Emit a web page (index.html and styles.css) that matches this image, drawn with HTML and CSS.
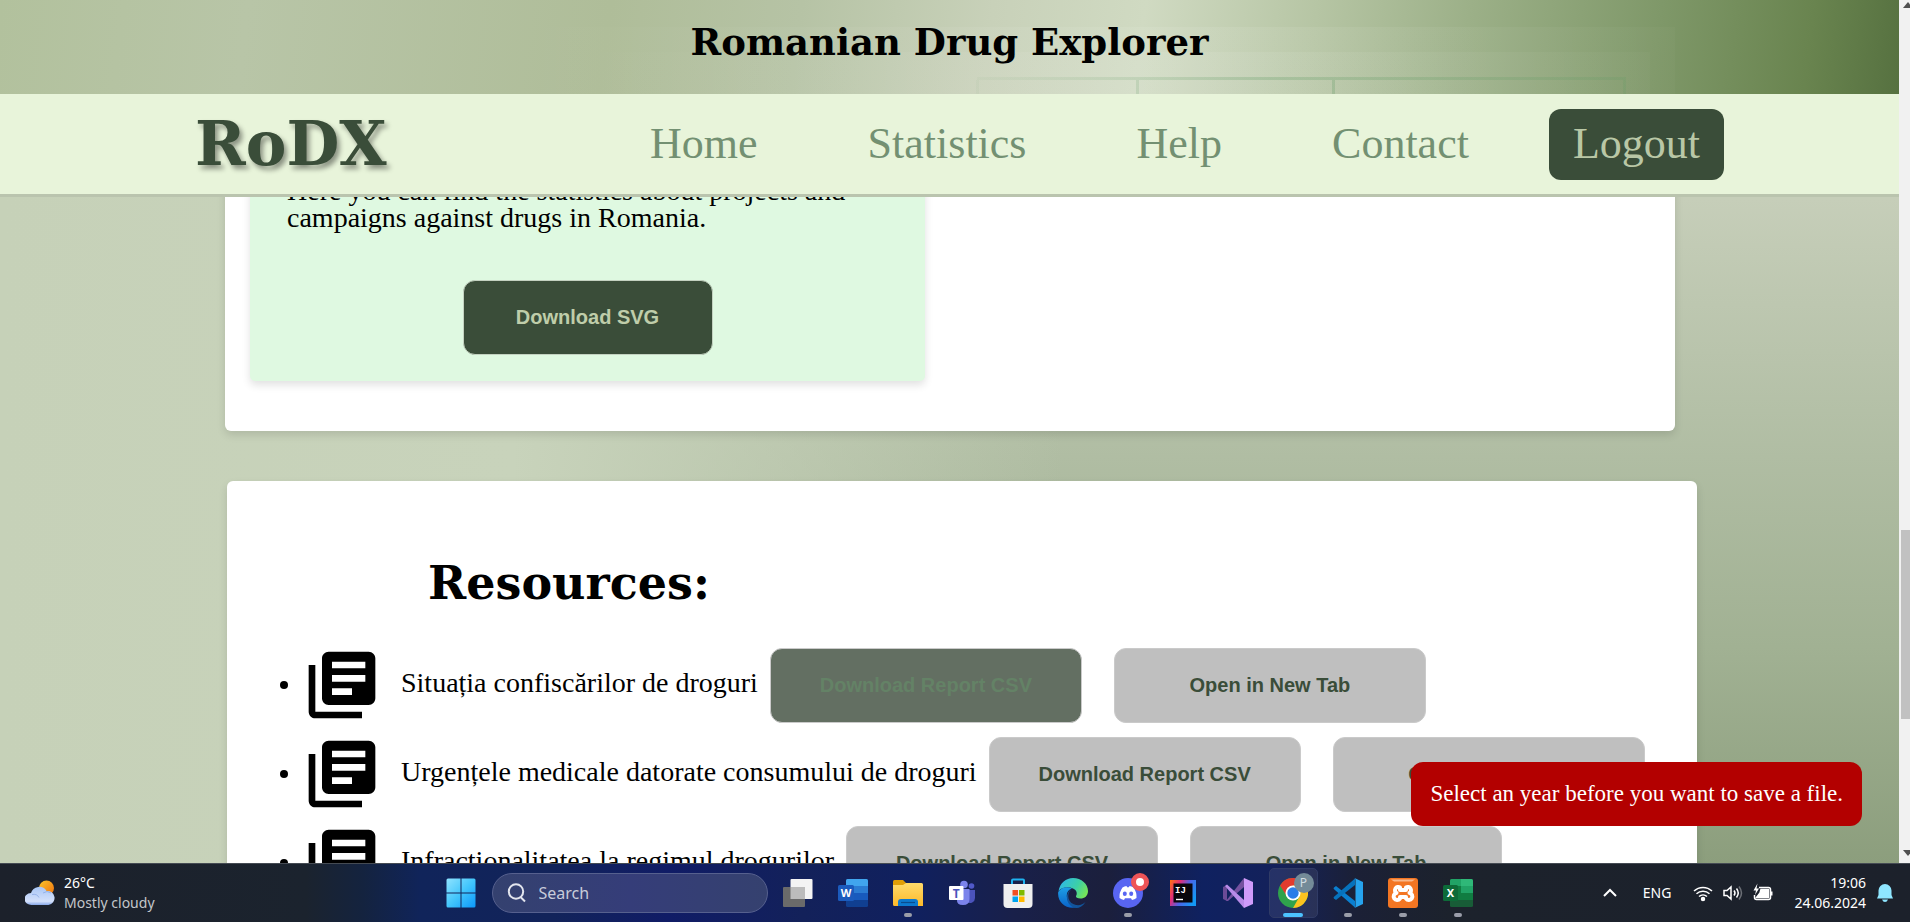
FILE: index.html
```html
<!DOCTYPE html>
<html lang="en">
<head>
<meta charset="utf-8">
<title>Romanian Drug Explorer</title>
<link rel="stylesheet" href="styles.css">
</head>
<body>
<svg class="defs" aria-hidden="true">
  <symbol id="books" viewBox="0 0 24 24"><path d="M4 6H2v14c0 1.1.9 2 2 2h14v-2H4V6zm16-4H8c-1.100 0-2 .9-2 2v12c0 1.100.9 2 2 2h12c1.100 0 2-.9 2-2V4c0-1.100-.9-2-2-2zm-1 5H9V5h10v2zm0 4H9V9h10v2zm-4 4H9v-2h6v2z"/></symbol>
</svg>
<div class="screen">
  <div class="browser">
    <div class="page">
      <header class="banner">
        <svg class="banner-art" viewBox="0 0 1899 94" preserveAspectRatio="none" aria-hidden="true">
          <defs>
            <linearGradient id="haze"><stop stop-color="#fff" stop-opacity="0"/><stop offset=".6" stop-color="#fff" stop-opacity=".08"/><stop offset="1" stop-color="#fff" stop-opacity=".02"/></linearGradient>
            <linearGradient id="rule" gradientUnits="userSpaceOnUse" x1="977" y1="0" x2="1626" y2="0"><stop stop-color="#5f9a63" stop-opacity=".05"/><stop offset=".45" stop-color="#5f9a63" stop-opacity=".28"/><stop offset="1" stop-color="#5f9a63" stop-opacity=".2"/></linearGradient>
          </defs>
          <rect x="500" y="27" width="1175" height="67" fill="url(#haze)"/>
          <rect x="560" y="52" width="1090" height="42" fill="url(#haze)"/>
          <path d="M977 77H1626V80H977zM976 80h3v14h-3zM1136 80h3v14h-3zM1332 80h3v14h-3zM1623 80h3v14h-3z" fill="url(#rule)"/>
        </svg>
        <h1 class="banner-title">Romanian Drug Explorer</h1>
      </header>
      <nav class="nav">
        <a class="logo" href="#">RoDX</a>
        <div class="links">
          <a class="link" href="#">Home</a>
          <a class="link" href="#">Statistics</a>
          <a class="link" href="#">Help</a>
          <a class="link" href="#">Contact</a>
          <button class="logout" type="button">Logout</button>
        </div>
      </nav>
      <main class="content">
        <div class="scrolled">
          <section class="panel charts">
            <article class="chart-card">
              <p class="chart-text">Here you can find the statistics about projects and campaigns against drugs in Romania.</p>
              <button class="btn btn-svg" type="button">Download SVG</button>
            </article>
          </section>
          <section class="panel resources">
            <h2 class="resources-title">Resources:</h2>
            <ul class="list">
              <li class="item"><svg class="item-icon" aria-hidden="true"><use href="#books"/></svg><span class="item-name">Situația confiscărilor de droguri</span><button class="btn btn-csv pressed" type="button">Download Report CSV</button><button class="btn btn-csv btn-open" type="button">Open in New Tab</button></li>
              <li class="item"><svg class="item-icon" aria-hidden="true"><use href="#books"/></svg><span class="item-name">Urgențele medicale datorate consumului de droguri</span><button class="btn btn-csv" type="button">Download Report CSV</button><button class="btn btn-csv btn-open" type="button">Open in New Tab</button></li>
              <li class="item"><svg class="item-icon" aria-hidden="true"><use href="#books"/></svg><span class="item-name">Infracționalitatea la regimul drogurilor</span><button class="btn btn-csv" type="button">Download Report CSV</button><button class="btn btn-csv btn-open" type="button">Open in New Tab</button></li>
            </ul>
          </section>
        </div>
      </main>
      <div class="toast" role="alert">Select an year before you want to save a file.</div>
    </div>
    <div class="scrollbar" aria-hidden="true">
      <svg class="arrow" viewBox="0 0 11 17"><path d="M4 8L9 2L14 8z"/></svg>
      <div class="track"><div class="thumb"></div></div>
      <svg class="arrow" viewBox="0 0 11 17"><path d="M4 4L9 10L14 4z"/></svg>
    </div>
  </div>

  <footer class="taskbar">
    <div class="weather">
      <svg class="weather-icon" viewBox="0 0 30 26" aria-hidden="true">
        <defs>
          <linearGradient id="sun" x2="1" y2="1"><stop stop-color="#f9c52c"/><stop offset="1" stop-color="#f0700c"/></linearGradient>
          <linearGradient id="cloud" x2="0" y2="1"><stop stop-color="#a9c6f5"/><stop offset=".8" stop-color="#d3e0fb"/><stop offset="1" stop-color="#87a7e8"/></linearGradient>
        </defs>
        <circle cx="21.500" cy="8" r="7.500" fill="url(#sun)"/>
        <path d="M7 25a7 6 0 0 1-1-12a8.500 8.500 0 0 1 15.500-2a7 7 0 0 1 2 14z" fill="url(#cloud)"/>
        <path d="M7 14.500q5-1 7 3M18 13q4-3 8 0" stroke="#7b9de0" fill="none" opacity=".6"/>
      </svg>
      <div class="stack"><span class="bright">26°C</span><span class="dim">Mostly cloudy</span></div>
    </div>
    <div class="apps">
      <button class="app" type="button" aria-label="Start">
        <svg class="ico" viewBox="0 0 30 30"><defs><linearGradient id="win" x2="1" y2="1"><stop stop-color="#8fe3ff"/><stop offset=".5" stop-color="#43c6fc"/><stop offset="1" stop-color="#0b98fb"/></linearGradient></defs><path fill="url(#win)" d="M2 .5H14.500V14.500H.5V2Q.5.5 2 .5zM15.500.5H28q1.500 0 1.500 1.500V14.500H15.500zM.5 15.500H14.500V29.500H2Q.5 29.500.5 28zM15.500 15.500H29.500V28q0 1.500-1.500 1.500H15.500z"/></svg>
      </button>
      <label class="search">
        <svg class="search-icon" viewBox="0 0 20 20" aria-hidden="true"><circle cx="9" cy="8.500" r="7.200"/><path d="M13.500 14L18 18.500"/></svg>
        <input class="search-input" type="text" placeholder="Search" aria-label="Search">
      </label>
      <button class="app" type="button" aria-label="Task View">
        <svg class="ico" viewBox="0 0 30 30"><rect x="7.500" y="1" width="22" height="20" rx="1" fill="#f4f4f4"/><rect y="9" width="22" height="20" rx="1" fill="#6a6a6a"/><path d="M7.500 9H22V21H7.500z" fill="#bcbcbc"/></svg>
      </button>
      <button class="app" type="button" aria-label="Word">
        <svg class="ico" viewBox="0 0 30 30"><rect x="8" y="1" width="22" height="28" rx="1.500" fill="#103f91"/><path d="M8 8h22v14H8z" fill="#185abd"/><path d="M8 8h22v7H8z" fill="#2b7cd3"/><path d="M9.500 1h19q1.500 0 1.500 1.500V8H8V2.500Q8 1 9.500 1z" fill="#41a5ee"/><rect y="7" width="16" height="16" rx="1.500" fill="#1b5bbd"/><text x="8" y="19" class="glyph g11">W</text></svg>
      </button>
      <button class="app running" type="button" aria-label="File Explorer">
        <svg class="ico" viewBox="0 0 30 30"><defs><linearGradient id="fold" x2="0" y2="1"><stop stop-color="#ffdb6b"/><stop offset="1" stop-color="#fdb92a"/></linearGradient></defs><path d="M0 3.500Q0 2 1.500 2H10l3 3v5H0z" fill="#e19e06"/><path d="M0 7h10l3-2h15.500Q30 5 30 6.500V28H1.500Q0 28 0 26.500z" fill="url(#fold)"/><path d="M5 28v-4q0-3 3-3h14q3 0 3 3v4z" fill="#0d79cf"/><path d="M8 24.500h14" stroke="#0a4c8e" stroke-width="1.200"/></svg>
      </button>
      <button class="app" type="button" aria-label="Teams">
        <svg class="ico" viewBox="0 0 30 30"><circle cx="23.500" cy="8" r="2.800" fill="#5059c9"/><path d="M19 12h8v8a5 5 0 0 1-8 4z" fill="#4b53bc"/><circle cx="16" cy="6.500" r="3.800" fill="#7b83eb"/><path d="M9 11h12.500v10q0 6-6.500 6t-6-5z" fill="#7b83eb"/><rect x="1" y="8" width="14.500" height="14" rx="1" fill="#fff"/><text x="8.200" y="19.500" class="glyph g12 teams">T</text></svg>
      </button>
      <button class="app" type="button" aria-label="Microsoft Store">
        <svg class="ico" viewBox="0 0 30 30"><path d="M9 7V2.500Q9 1.500 10 1.500H20Q21 1.500 21 2.500V7" fill="none" stroke="#1fb2ef" stroke-width="2"/><path d="M.5 6h29v20q0 4-4 4h-21q-4 0-4-4z" fill="#efefef"/><path d="M9.500 12H15v5.500H9.500z" fill="#f25022"/><path d="M16 12h5.500v5.500H16z" fill="#7fba00"/><path d="M9.500 18.500H15V24H9.500z" fill="#00a4ef"/><path d="M16 18.500h5.500V24H16z" fill="#ffb900"/></svg>
      </button>
      <button class="app" type="button" aria-label="Edge">
        <svg class="ico" viewBox="0 0 30 30"><defs><linearGradient id="e1" y1=".2" x2="1" y2=".6"><stop stop-color="#2fb6ea"/><stop offset=".6" stop-color="#3cd0a7"/><stop offset="1" stop-color="#75e558"/></linearGradient><linearGradient id="e2" x2="0" y2="1"><stop stop-color="#1e9fe6"/><stop offset="1" stop-color="#0a63c9"/></linearGradient></defs><path d="M.5 13C2 5 8 0 15 0c8.500 0 15 6 15 13 0 5-3.500 7.500-7.500 7.500-3 0-5-1-4.500-2.500 1.500-2 1-6-3-7.500C10 8.500 4 9 .5 13z" fill="url(#e1)"/><path d="M.2 14C3 9 9 8 14 10.500c-4 1-6 5-5 9 1.300 6 6 9 10 9.500C9 32-1 25 .2 14z" fill="url(#e2)"/><path d="M13 11.500c-5 5-3 14 5 15.500 4 .6 7-.7 9.500-3-2.500 4-6 6-9 6C9 29 5.500 17 13 11.500z" fill="#12549b"/></svg>
      </button>
      <button class="app running" type="button" aria-label="Discord">
        <svg class="ico" viewBox="0 0 30 30"><circle cx="15" cy="15" r="15" fill="#5865f2"/><path d="M9.500 9.500q2-1.200 4-1.500l.6 1.300h1.800L16.500 8q2 .3 4 1.500 3.500 5 3 10.500-2 1.700-4.500 2l-1-1.800h-6l-1 1.800q-2.500-.3-4.500-2-.5-5.500 3-10.500z" fill="#fff"/><ellipse cx="11.800" cy="15.800" rx="2" ry="2.200" fill="#5865f2"/><ellipse cx="18.200" cy="15.800" rx="2" ry="2.200" fill="#5865f2"/></svg>
        <span class="alert-badge"></span>
      </button>
      <button class="app" type="button" aria-label="IntelliJ IDEA">
        <svg class="ico" viewBox="0 0 30 30"><defs><linearGradient id="ij" y1=".1" x2="1" y2=".6"><stop stop-color="#fe6b1a"/><stop offset=".3" stop-color="#e12c7a"/><stop offset=".6" stop-color="#4d63e8"/><stop offset="1" stop-color="#1498f4"/></linearGradient></defs><path d="M2 2h26v26H2z" fill="url(#ij)"/><path d="M5.500 5.500h19v19h-19z" fill="#08050c"/><path d="M8 21.500h7" stroke="#fff" stroke-width="1.400"/><text x="12.500" y="15" class="glyph mono">IJ</text></svg>
      </button>
      <button class="app" type="button" aria-label="Visual Studio">
        <svg class="ico" viewBox="0 0 30 30"><path d="M0 9l4-2v16l-4-2z" fill="#6c4b97"/><path d="M3 23L21 0v9L5 23z" fill="#74519f"/><path d="M4 6.500L21 22v8L2 8z" fill="#b98be9"/><path d="M21 0l9 4v22l-9 4z" fill="#cf9bfa"/></svg>
      </button>
      <button class="app active" type="button" aria-label="Chrome">
        <svg class="ico" viewBox="0 0 30 30"><circle cx="15" cy="15" r="15" fill="#2fa24c"/><path d="M2 7.500A15 15 0 0 1 28 7.500H15L9 18.500z" fill="#e33b2e"/><path d="M28 7.500A15 15 0 0 1 15 30l6.500-11.500L15 7.500z" fill="#fcc31e"/><circle cx="15" cy="15" r="7.500" fill="#fff"/><circle cx="15" cy="15" r="5.700" fill="#2b7de9"/></svg>
        <span class="profile-badge">P</span>
      </button>
      <button class="app running" type="button" aria-label="Visual Studio Code">
        <svg class="ico" viewBox="0 0 30 30"><path d="M1 9.500L3 8l19 15v6.500L.8 11q-.6-.8.2-1.500z" fill="#0a7fd0"/><path d="M1 20.500L3 22 22 7V.5L.8 19q-.6.8.2 1.500z" fill="#0672bd"/><path d="M21.500 0L30 4V26l-8.500 4q1-.8 1-2V2q0-1.200-1-2z" fill="#26a3ee"/></svg>
      </button>
      <button class="app running" type="button" aria-label="XAMPP">
        <svg class="ico" viewBox="0 0 30 30"><rect width="30" height="30" rx="3" fill="#f37623"/><path d="M3 1.500h24l-3 2H6z" fill="#f9b88b"/><path d="M12 12v-2.500a3 3 0 1 0-3.500 5.500a3.500 3.500 0 1 0 3.500 5.500V19h6v1.500a3.500 3.500 0 1 0 3.500-5.500a3 3 0 1 0-3.500-5.500V12z" fill="none" stroke="#fff" stroke-width="4" stroke-linejoin="round"/></svg>
      </button>
      <button class="app running" type="button" aria-label="Excel">
        <svg class="ico" viewBox="0 0 30 30"><rect x="7" y="1" width="23" height="28" rx="1.500" fill="#185c37"/><path d="M7 8h11v14H7z" fill="#107c41"/><path d="M18 15h12v7H18z" fill="#107c41"/><path d="M18 8h12v7H18z" fill="#21a366"/><path d="M8.500 1H18v7H7V2.500Q7 1 8.500 1z" fill="#21a366"/><path d="M18 1h10.500Q30 1 30 2.500V8H18z" fill="#2fb878"/><rect y="7" width="15" height="16" rx="1.500" fill="#0d6b38"/><text x="7.500" y="19" class="glyph g11">X</text></svg>
      </button>
    </div>
    <div class="tray">
      <svg class="chevron" viewBox="0 0 14 20" aria-hidden="true"><path d="M1 13l6-6 6 6"/></svg>
      <span class="lang">ENG</span>
      <div class="status">
        <svg class="status-icon" viewBox="0 0 20 20" aria-hidden="true"><path d="M1 8a13 13 0 0 1 18 0M3.500 10.800a9.500 9.500 0 0 1 13 0M6 13.500a6 6 0 0 1 8 0"/><circle cx="10" cy="16" r="1.500" fill="#fff"/></svg>
        <svg class="status-icon" viewBox="0 0 20 20" aria-hidden="true"><path d="M1 7.500H4L8 4V16L4 12.500H1zM11 7.500q2 2.500 0 5M13.500 5.500q3.500 4.500 0 9"/><path d="M16 3.500q5 6.500 0 13" opacity=".35"/></svg>
        <svg class="status-icon" viewBox="0 0 20 20" aria-hidden="true"><path d="M6 4.500H15.500Q17.500 4.500 17.500 6.500V14.500Q17.500 16.500 15.500 16.500H3.500Q1.500 16.500 1.500 14.500V12"/><path d="M8 6.500h7.500V14.500H3.500L7 10z" fill="#fff"/><path d="M17.500 8.500h2v4h-2z" fill="#fff" stroke="none"/><path d="M4.500.5L.5 7.500H3L2 12 6 5.500H3.500z" fill="#fff" stroke="none"/></svg>
      </div>
      <div class="stack clock"><span>19:06</span><span>24.06.2024</span></div>
      <svg class="bell" viewBox="0 0 18 20" aria-hidden="true"><path d="M9 1a6.500 6.500 0 0 1 6.500 6.500V12l1.500 3.500H1L2.500 12V7.500A6.500 6.500 0 0 1 9 1zM6 16.500h6q-1 2.500-3 2.500t-3-2.500z"/></svg>
    </div>
  </footer>
</div>
</body>
</html>
```

FILE: styles.css
```css
* { box-sizing: border-box; }

body {
  margin: 0;
  color: #000;
  font-family: "Liberation Serif", serif;
}

button { font: inherit; cursor: pointer; }
.defs { display: none; }

.screen {
  display: flex;
  flex-direction: column;
  height: 100vh;
  overflow: hidden;
}

.browser {
  display: flex;
  flex: 1;
  min-height: 0;
}

.page {
  position: relative;
  display: flex;
  flex: 1;
  flex-direction: column;
  min-width: 0;
  background:
    linear-gradient(90deg, #c6d1b8 0%, #c8d3bb 27%, #c8d3bb00 56%),
    linear-gradient(180deg, #c6ceb9 23%, #b0bda3 53%, #a1b193 75%, #8c9e7d 100%);
}

/* Banner */
.banner {
  position: relative;
  display: flex;
  align-items: center;
  justify-content: center;
  height: 94px;
  padding-bottom: 10px;
  background: linear-gradient(97deg, #b2c19d 0%, #b8c5a7 13%, #afbd99 32%, #b6c3a5 42%, #c8d1b9 52%, #d0dac2 60%, #b6c5a4 69%, #9cb088 77%, #7f9869 87%, #69844f 95%, #567140 100%);
}

.banner-art {
  position: absolute;
  inset: 0;
  width: 100%;
  height: 100%;
}

.banner-title {
  position: relative;
  margin: 0;
  font: bold 37px/48px "DejaVu Serif", serif;
}

/* Navigation */
.nav {
  display: flex;
  align-items: center;
  justify-content: space-between;
  height: 103px;
  padding: 0 175px 0 195px;
  border-bottom: 3px solid #bac4ae;
  background: #e8f4da;
}

.logo {
  color: #3a4d39;
  font: bold 61px/72px "DejaVu Serif", serif;
  text-decoration: none;
  text-shadow: 3px 4px 5px rgba(0, 0, 0, .4);
}

.links {
  display: flex;
  align-items: center;
  gap: 110px;
}

.link {
  color: #739072;
  font-size: 44px;
  line-height: 50px;
  text-decoration: none;
}

.logout {
  height: 71px;
  margin-left: -30px;
  padding: 0 24px;
  border: 0;
  border-radius: 12px;
  background: #3a4d39;
  color: #b9c7a6;
  font-size: 44px;
  line-height: 50px;
}

/* Scrolled content */
.content {
  flex: 1;
  min-height: 0;
  overflow: hidden;
}

.scrolled { margin-top: -60px; }

.panel {
  border-radius: 6px;
  background: #fff;
  box-shadow: 0 4px 8px rgba(0, 0, 0, .12);
}

.charts {
  margin: 0 224px 50px 225px;
  padding: 20px 25px 50px;
}

.chart-card {
  display: flex;
  flex-direction: column;
  align-items: center;
  gap: 49px;
  width: 675px;
  padding: 20px 37px 26px;
  border-radius: 5px;
  background: #dff9e1;
  box-shadow: 0 4px 8px rgba(0, 0, 0, .12);
}

.chart-text {
  margin: 0;
  font-size: 28px;
  line-height: 27px;
}

.btn {
  flex: none;
  height: 75px;
  border: 1px solid #cacaca;
  border-radius: 12px;
  font: bold 20px "Liberation Sans", sans-serif;
}

.btn-svg {
  width: 250px;
  border-color: #c3d1c0;
  background: #3a4d39;
  color: #bfcdaa;
}

.resources {
  margin: 0 202px 0 227px;
  padding: 70px 50px 50px 53px;
}

.resources-title {
  margin: 0 0 30px 148px;
  font: bold 46px/64px "DejaVu Serif", serif;
}

.list {
  display: flex;
  flex-direction: column;
  gap: 9px;
  margin: 0;
  padding: 0;
  list-style: none;
}

.item {
  display: flex;
  align-items: center;
}

.item::before {
  width: 8px;
  height: 8px;
  margin-right: 14px;
  border-radius: 50%;
  background: #000;
  content: "";
}

.item-icon {
  flex: none;
  width: 80px;
  height: 80px;
}

.item-name {
  margin: 0 12px 0 19px;
  padding-bottom: 4px;
  font-size: 28px;
  line-height: 32px;
  white-space: nowrap;
}

.btn-csv {
  width: 312px;
  background: #bfbfbf;
  color: #3a4d39;
}

.btn-open { margin-left: 32px; }

.pressed {
  background: #636f62;
  color: #648266;
}

.toast {
  position: absolute;
  right: 37px;
  bottom: 37px;
  padding: 20px 19px;
  border-radius: 12px;
  background: #b30000;
  color: #fff;
  font-size: 23px;
  line-height: 24px;
}

/* Page scrollbar */
.scrollbar {
  display: flex;
  flex-direction: column;
  width: 11px;
  background: #f1f1f1;
}

.arrow {
  width: 11px;
  height: 17px;
  fill: #505050;
}

.track {
  flex: 1;
  padding: 513px 0 0 2px;
}

.thumb {
  height: 189px;
  background: #c1c1c1;
}

/* Taskbar */
.taskbar {
  display: grid;
  grid-template-columns: 1fr auto 1fr;
  align-items: center;
  height: 59px;
  padding-left: 9px;
  border-top: 1px solid #454b53;
  background: linear-gradient(90deg, #1c212b 0%, #1b232e 16%, #14233f 19%, #10245a 22%, #12235a 29%, #101c66 35%, #13215a 42%, #10205e 48%, #19204a 53%, #1b1f3c 58%, #0f2160 63%, #14215a 67%, #1b2036 71%, #1c222c 76%, #1c212b 100%);
  color: #fff;
  font: 14px/20px "Noto Sans", sans-serif;
}

.weather {
  display: flex;
  align-items: center;
  gap: 9px;
  padding-left: 16px;
}

.weather-icon { width: 30px; height: 26px; }

.stack {
  display: flex;
  flex-direction: column;
}

.dim { color: #c3c6ca; }

.apps { display: flex; align-items: center; }

.app {
  position: relative;
  display: grid;
  place-items: center;
  width: 55px;
  height: 58px;
  padding: 0;
  border: 0;
  background: none;
}

.ico { width: 30px; height: 30px; }

.active::before {
  position: absolute;
  inset: 4px 3px;
  border: 1px solid #303b66;
  border-radius: 5px;
  background: rgba(255, 255, 255, .08);
  content: "";
}

.active .ico { position: relative; }

.running::after,
.active::after {
  position: absolute;
  bottom: 5px;
  width: 8px;
  height: 4px;
  border-radius: 2px;
  background: #9a9da9;
  content: "";
}

.active::after { width: 20px; background: #4cc2ff; }

.alert-badge,
.profile-badge {
  position: absolute;
  border-radius: 50%;
}

.alert-badge {
  top: 9px;
  left: 30px;
  width: 18px;
  height: 18px;
  border: 5px solid #ee5457;
  background: #fff;
}

.profile-badge {
  top: 9px;
  left: 28px;
  width: 20px;
  height: 20px;
  background: #748b98;
  color: #d3dee3;
  font: 12px/20px "Noto Sans", sans-serif;
  text-align: center;
}

.glyph {
  fill: #fff;
  font-family: "Noto Sans", sans-serif;
  font-weight: bold;
  text-anchor: middle;
}

.g11 { font-size: 11px; }
.g12 { font-size: 12px; }
.teams { fill: #4b53bc; }
.mono { font-family: "Liberation Mono", monospace; font-size: 9px; }

.search {
  display: flex;
  align-items: center;
  gap: 12px;
  width: 276px;
  height: 40px;
  margin: 0 3px;
  padding: 0 14px;
  border: 1px solid #56608e;
  border-radius: 20px;
  background: linear-gradient(90deg, #34416f, #353d79 50%, #35416f);
}

.search-icon {
  flex: none;
  width: 20px;
  height: 20px;
  fill: none;
  stroke: #e2e5ee;
  stroke-width: 2;
}

.search-input {
  width: 100%;
  padding: 0;
  border: 0;
  outline: 0;
  background: none;
  color: #fff;
  font: 16px/24px "Noto Sans", sans-serif;
}

.search-input::placeholder { color: #c8ccdb; }

.tray {
  display: flex;
  align-items: center;
  justify-content: flex-end;
  padding-right: 16px;
}

.chevron,
.status-icon {
  fill: none;
  stroke: #fff;
}

.chevron { width: 14px; height: 20px; stroke-width: 2; }
.lang { margin: 0 22px 0 26px; }

.status { display: flex; gap: 10px; }
.status-icon { width: 20px; height: 20px; stroke-width: 1.500; }

.clock { margin: 0 10px 0 21px; text-align: right; }
.bell { width: 18px; height: 20px; fill: #8fe6ff; }
```
